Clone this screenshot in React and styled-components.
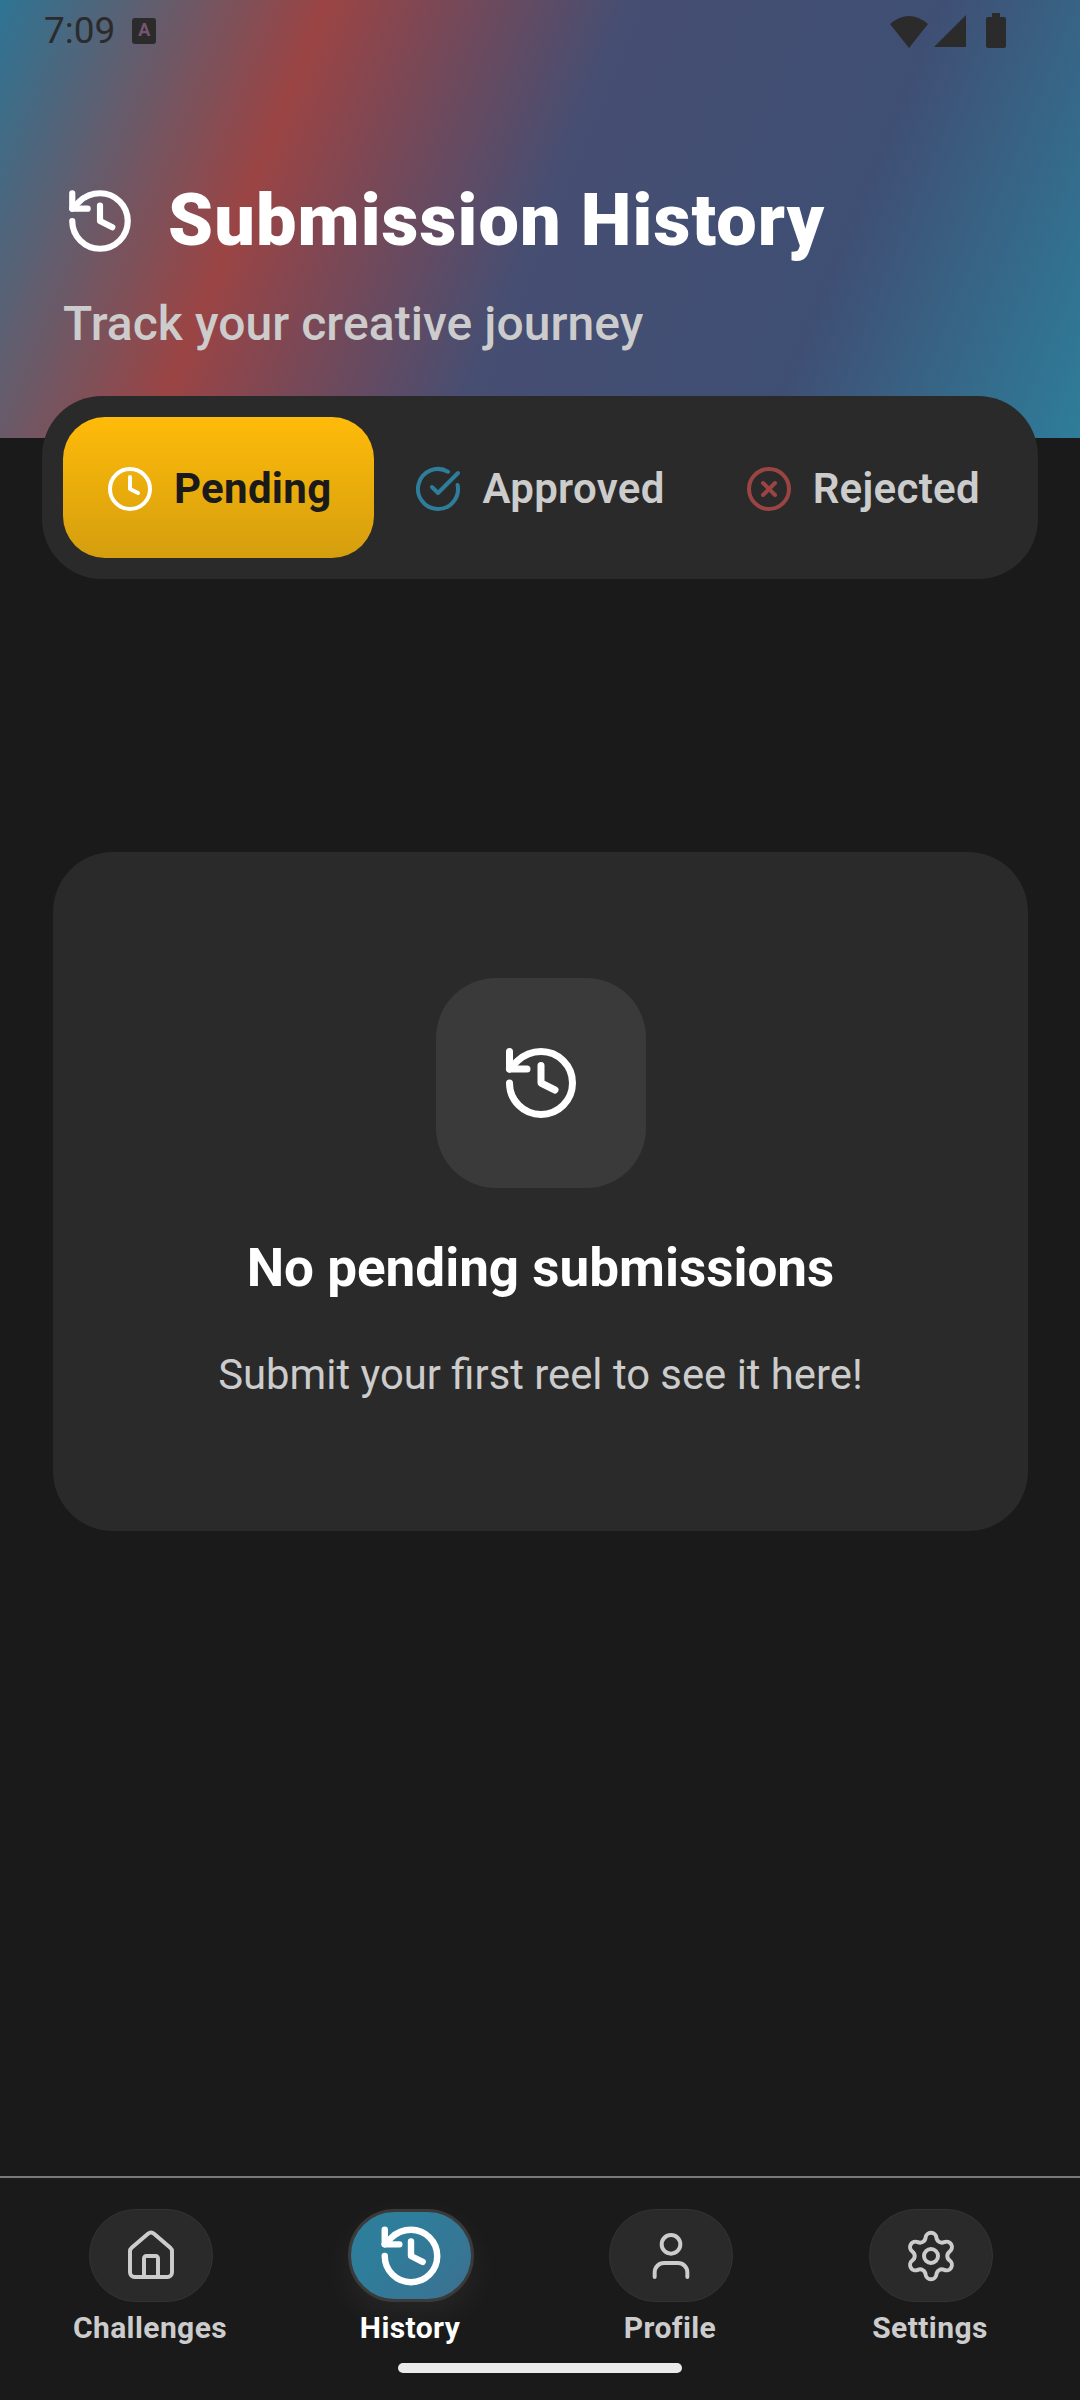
import React from "react";
import styled, { createGlobalStyle } from "styled-components";
import { History, Clock, CircleCheckBig, CircleX, House, User, Settings } from "lucide-react";

const Global = createGlobalStyle`
  html, body { margin: 0; padding: 0; background: #1a1a1a; }
  body { font-family: Roboto, "Liberation Sans", sans-serif; overflow: hidden; }
  * { box-sizing: border-box; }
`;

const Page = styled.div`
  width: 1080px;
  height: 2400px;
  display: flex;
  flex-direction: column;
  background: #1a1a1a;
`;

const Header = styled.header`
  height: 438px;
  flex: none;
  padding: 0 63px;
  background: linear-gradient(112.1deg, #2e7494 0%, #9b4444 26%, #464e72 50%, #3f4f74 75%, #2e7d9a 100%);
`;

const StatusBar = styled.div`
  height: 62px;
  margin: 0 -63px;
  padding: 0 73px 0 44px;
  display: flex;
  align-items: center;
  color: #2b2b2b;
`;

const Time = styled.span`
  font-size: 37px;
  line-height: 62px;
`;

const KeyboardBadge = styled.span`
  width: 24px;
  height: 26px;
  margin-left: 17px;
  border-radius: 3px;
  background: #2b2b2b;
  color: #75566f;
  font-size: 18px;
  font-weight: 700;
  line-height: 24px;
  text-align: center;
`;

const StatusIcons = styled.div`
  margin-left: auto;
  display: flex;
  align-items: center;
  gap: 4px;
`;

const TitleRow = styled.div`
  margin-top: 122px;
  display: flex;
  align-items: center;
  gap: 31px;
  color: #fff;
`;

const Title = styled.h1`
  margin: 0;
  font-size: 72px;
  line-height: 72px;
  font-weight: 900;
  letter-spacing: 1.1px;
  color: #fff;
`;

const Subtitle = styled.p`
  margin: 38px 0 0;
  font-size: 48px;
  line-height: 56px;
  font-weight: 500;
  letter-spacing: 0.06px;
  color: #cccccc;
`;

const Tabs = styled.div`
  flex: none;
  position: relative;
  height: 183px;
  margin: -42px 42px 0;
  padding: 21px;
  display: flex;
  border-radius: 60px;
  background: #2a2a2a;
`;

const Tab = styled.div`
  flex: 0 0 auto;
  padding: 2px ${(p) => (p.$active ? 43 : 40)}px 0;
  display: flex;
  align-items: center;
  justify-content: center;
  gap: 20px;
  border-radius: 42px;
  font-size: 42px;
  letter-spacing: 0.3px;
  font-weight: ${(p) => (p.$active ? 700 : 600)};
  color: ${(p) => (p.$active ? "#1a1a1a" : "#cccccc")};
  background: ${(p) => (p.$active ? "linear-gradient(180deg, #ffbb0a 0%, #d49e0e 100%)" : "transparent")};
`;

const Main = styled.main`
  flex: 1;
  padding: 273px 52px 0 53px;
`;

const Card = styled.section`
  height: 679px;
  padding-top: 126px;
  display: flex;
  flex-direction: column;
  align-items: center;
  border-radius: 60px;
  background: #2a2a2a;
`;

const IconBox = styled.div`
  width: 210px;
  height: 210px;
  display: flex;
  align-items: center;
  justify-content: center;
  border-radius: 60px;
  background: #3a3a3a;
  color: #fff;
`;

const CardTitle = styled.h2`
  margin: 48px 0 0;
  font-size: 53px;
  line-height: 64px;
  font-weight: 700;
  color: #fff;
`;

const CardText = styled.p`
  margin: 50px 0 0;
  font-size: 41.8px;
  line-height: 50px;
  font-weight: 400;
  color: #cccccc;
`;

const Nav = styled.nav`
  flex: none;
  height: 224px;
  border-top: 2px solid #7a7a7a;
  padding: 31px 20px 0;
  display: flex;
  flex-direction: column;
  align-items: center;
`;

const NavItems = styled.div`
  align-self: stretch;
  display: grid;
  grid-template-columns: repeat(4, 1fr);
`;

const NavItem = styled.div`
  display: flex;
  flex-direction: column;
  align-items: center;
`;

const NavPill = styled.div`
  width: ${(p) => (p.$active ? 126 : 124)}px;
  height: 93px;
  margin-left: 1px;
  display: flex;
  align-items: center;
  justify-content: center;
  border-radius: 47px;
  border: ${(p) => (p.$active ? "3px solid #3a3a3a" : "1px solid #333333")};
  background: ${(p) => (p.$active ? "linear-gradient(135deg, #2e7d9a 35%, #3d7090 100%)" : "#2a2a2a")};
  color: ${(p) => (p.$active ? "#fff" : "#cccccc")};
  box-shadow: ${(p) => (p.$active ? "0 12px 36px rgba(255, 255, 255, 0.06)" : "none")};
`;

const NavLabel = styled.span`
  margin-top: 8px;
  font-size: 30px;
  line-height: 36px;
  font-weight: 700;
  letter-spacing: 0.4px;
  color: ${(p) => (p.$active ? "#fff" : "#cccccc")};
`;

const HomeBar = styled.div`
  width: 284px;
  height: 10px;
  margin-top: 17px;
  border-radius: 5px;
  background: #ebebeb;
`;

const WifiIcon = () => (
  <svg width="40" height="34" viewBox="0 0 40 34">
    <path d="M20 34 L1 10 Q20 -6 39 10 Z" fill="#2b2b2b" />
  </svg>
);

const SignalIcon = () => (
  <svg width="34" height="34" viewBox="0 0 34 34">
    <path d="M1 33 L33 1 V33 Z" fill="#2b2b2b" />
  </svg>
);

const BatteryIcon = () => (
  <svg width="22" height="36" viewBox="0 0 22 36" style={{ marginLeft: 14 }}>
    <path d="M7 0 H15 V4 H19 Q21 4 21 6 V33 Q21 35 19 35 H3 Q1 35 1 33 V6 Q1 4 3 4 H7 Z" fill="#2b2b2b" />
  </svg>
);

const tabs = [
  { label: "Pending", Icon: Clock, color: "#ffffff", active: true },
  { label: "Approved", Icon: CircleCheckBig, color: "#2e7d9a" },
  { label: "Rejected", Icon: CircleX, color: "#9b4444" },
];

const navItems = [
  { label: "Challenges", Icon: House },
  { label: "History", Icon: History, active: true },
  { label: "Profile", Icon: User },
  { label: "Settings", Icon: Settings },
];

export default function App() {
  return (
    <Page>
      <Global />
      <Header>
        <StatusBar>
          <Time>7:09</Time>
          <KeyboardBadge>A</KeyboardBadge>
          <StatusIcons>
            <WifiIcon />
            <SignalIcon />
            <BatteryIcon />
          </StatusIcons>
        </StatusBar>
        <TitleRow>
          <History size={74} strokeWidth={2} />
          <Title>Submission History</Title>
        </TitleRow>
        <Subtitle>Track your creative journey</Subtitle>
      </Header>
      <Tabs>
        {tabs.map(({ label, Icon, color, active }) => (
          <Tab key={label} $active={active}>
            <Icon size={48} color={color} strokeWidth={2} />
            {label}
          </Tab>
        ))}
      </Tabs>
      <Main>
        <Card>
          <IconBox>
            <History size={84} strokeWidth={2} />
          </IconBox>
          <CardTitle>No pending submissions</CardTitle>
          <CardText>Submit your first reel to see it here!</CardText>
        </Card>
      </Main>
      <Nav>
        <NavItems>
          {navItems.map(({ label, Icon, active }) => (
            <NavItem key={label}>
              <NavPill $active={active}>
                <Icon size={active ? 70 : 56} strokeWidth={active ? 2.2 : 1.7} />
              </NavPill>
              <NavLabel $active={active}>{label}</NavLabel>
            </NavItem>
          ))}
        </NavItems>
        <HomeBar />
      </Nav>
    </Page>
  );
}
